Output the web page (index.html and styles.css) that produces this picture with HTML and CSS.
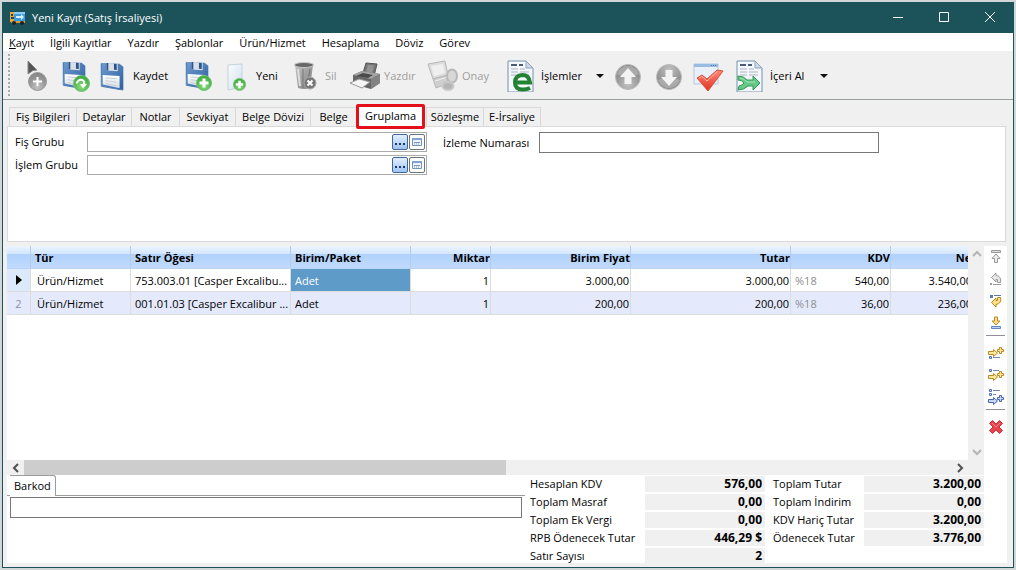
FILE: index.html
```html
<!DOCTYPE html>
<html lang="tr">
<head>
    <meta charset="UTF-8">
    <meta name="viewport" content="width=device-width, initial-scale=1.0">
    <title>Yeni Kayıt (Satış İrsaliyesi)</title>
    <link rel="stylesheet" href="styles.css">
</head>
<body>
    <!-- Shared icon parts -->
    <svg class="defs" aria-hidden="true">
        <defs>
            <linearGradient id="g-blue" x1="0" y1="0" x2="1" y2="1"><stop offset="0" stop-color="#6f9bd0"/><stop offset="1" stop-color="#2d5f9f"/></linearGradient>
            <linearGradient id="g-white" x1="0" y1="0" x2="0" y2="1"><stop offset="0" stop-color="#fff"/><stop offset="1" stop-color="#d3dce4"/></linearGradient>
            <linearGradient id="g-gray" x1="0" y1="0" x2="1" y2="1"><stop offset="0" stop-color="#c4c4c4"/><stop offset="1" stop-color="#7c7c7c"/></linearGradient>
            <radialGradient id="g-ball" cx=".5" cy=".8" r=".8"><stop offset="0" stop-color="#c2c2c2"/><stop offset=".6" stop-color="#979797"/><stop offset="1" stop-color="#838383"/></radialGradient>
            <radialGradient id="g-green" cx=".5" cy=".7" r=".7"><stop offset="0" stop-color="#8bdc7c"/><stop offset="1" stop-color="#36a33b"/></radialGradient>
            <linearGradient id="g-red" x1="0" y1="0" x2="0" y2="1"><stop offset="0" stop-color="#fb8a78"/><stop offset="1" stop-color="#e5301f"/></linearGradient>
            <linearGradient id="g-page" x1="0" y1="0" x2="1" y2="1"><stop offset="0" stop-color="#fbfdfe"/><stop offset="1" stop-color="#cfe0ec"/></linearGradient>
            <symbol id="floppy" viewBox="0 0 32 32">
                <path d="M3 2h3l17 1 4 3v25L4 27z" fill="url(#g-blue)"/>
                <path d="M5 15l18 1v13L5 25z" fill="url(#g-white)"/>
                <path d="M9 2l12 1v8L9 10z" fill="#d9e0e8"/>
                <path d="M9 2h2v8H9zM17 3l3 .2v6.3l-3-.2z" fill="#2e5588"/>
                <path d="M8 18l12 1M8 21l12 1.500M8 24l12 2.500" stroke="#c3ccd4"/>
                <path d="M3.500 3v24l23 4" fill="none" stroke="#4777b3"/>
            </symbol>
            <symbol id="plus-ball" viewBox="0 0 16 16">
                <circle cx="8" cy="8" r="7.500" fill="url(#g-green)" stroke="#73c276"/>
                <path d="M8 3.500v9M3.500 8h9" stroke="#fff" stroke-width="3"/>
            </symbol>
            <symbol id="doc" viewBox="0 0 32 32">
                <path d="M2 1h18l7 7v24H2z" fill="#f4f8fc" stroke="#7590ae"/>
                <path d="M20 1v7h7z" fill="#cddaea" stroke="#8ca3bd"/>
                <path d="M5 5h6M13 5h4" stroke="#4a5c78" stroke-width="2"/>
                <path d="M5 9h7M14 9h5M5 12h7M14 12h9M5 15h7M14 15h9" stroke="#a9b3c3"/>
            </symbol>
            <symbol id="arrow-ball" viewBox="0 0 32 32">
                <circle cx="16" cy="17" r="12.500" fill="url(#g-ball)" stroke="#bcbcbc"/>
                <path d="M5 14a11.500 11.500 0 0 1 22 0q-11 5-22 0z" fill="#bdbdbd" opacity=".6"/>
                <path d="M16 8l8 9h-4.500v7h-7v-7H8z" fill="#f3f3f3"/>
            </symbol>
            <symbol id="dots" viewBox="0 0 12 12"><path d="M1 7h2v2H1zM5 7h2v2H5zM9 7h2v2H9z" fill="#1c3766"/></symbol>
            <symbol id="card" viewBox="0 0 12 12">
                <path d="M1.500 2.500h9v7h-9z" fill="#eef4fc" stroke="#7591bd"/>
                <path d="M2 2h8v2H2z" fill="#7fa3d6"/>
                <path d="M3 6.500h6" stroke="#8298bb"/>
                <path d="M3 8h1M5 8h1M7 8h1" stroke="#8298bb"/>
            </symbol>
            <symbol id="arrow-plus" viewBox="0 0 16 10">
                <path d="M.5 4.500h5v-2l4 3.500-4 3.500v-2h-5z" stroke="currentColor"/>
                <path d="M11.500 .5h2v2h2v2h-2v2h-2v-2h-2v-2h2z" stroke="currentColor"/>
            </symbol>
        </defs>
    </svg>

    <div class="window">
        <header class="titlebar">
            <svg class="app-icon" viewBox="0 0 16 16">
                <path d="M0 2h5v10H0z" fill="#e2a93c"/>
                <path d="M1 4h2v2H1zM1 7h3v2H1z" fill="#25404a"/>
                <path d="M4 2h11v9H4z" fill="#3f9be0"/>
                <path d="M4 2h11v2H4z" fill="#8ccdf5"/>
                <path d="M6 6h5V4l3 3-3 3V8H6z" fill="#d8effc"/>
                <path d="M1 11h14v2H1z" fill="#d79b32"/>
                <circle cx="4" cy="13" r="2" fill="#182327"/><circle cx="12" cy="13" r="2" fill="#182327"/>
            </svg>
            <h1 class="title">Yeni Kayıt (Satış İrsaliyesi)</h1>
            <button class="win-btn" aria-label="Simge durumuna küçült"><svg viewBox="0 0 10 10"><path d="M0 5.500h10"/></svg></button>
            <button class="win-btn" aria-label="Ekranı kapla"><svg viewBox="0 0 10 10"><path d="M.5 .5h9v9h-9z"/></svg></button>
            <button class="win-btn" aria-label="Kapat"><svg viewBox="0 0 10 10"><path d="M0 0l10 10M10 0L0 10"/></svg></button>
        </header>

        <nav class="menu">
            <button><u>K</u>ayıt</button>
            <button>İlgili Kayıtlar</button>
            <button>Yazdır</button>
            <button>Şablonlar</button>
            <button>Ürün/Hizmet</button>
            <button>Hesaplama</button>
            <button>Döviz</button>
            <button>Görev</button>
        </nav>

        <div class="toolbar">
            <span class="grip"></span>
            <button class="tool" aria-label="Seç ve ekle">
                <svg viewBox="0 0 32 32">
                    <path d="M6 1l9 9-4 .5L6 14z" fill="#555" stroke="#888"/>
                    <circle cx="15.500" cy="21.500" r="9" fill="url(#g-ball)" stroke="#999"/>
                    <path d="M15.500 17v9M11 21.500h9" stroke="#fff" stroke-width="2"/>
                </svg>
            </button>
            <button class="tool" aria-label="Kaydet ve yenile">
                <svg viewBox="0 0 32 32">
                    <use href="#floppy" width="32" height="30"/>
                    <circle cx="22.500" cy="23.500" r="8" fill="url(#g-green)" stroke="#73c276"/>
                    <path d="M17.500 23.500q2-5 6-3.500 3 2 1 5" fill="none" stroke="#fff" stroke-width="2"/>
                    <path d="M28 24l-7 0 3 4.500z" fill="#fff"/>
                </svg>
            </button>
            <button class="tool"><svg viewBox="0 0 32 32"><use href="#floppy" width="30" height="32"/></svg>Kaydet</button>
            <button class="tool" aria-label="Kaydet ve yeni">
                <svg viewBox="0 0 32 32"><use href="#floppy" width="32" height="30"/><use href="#plus-ball" x="14" y="15" width="16" height="16"/></svg>
            </button>
            <button class="tool">
                <svg viewBox="0 0 32 32"><path d="M7 5l14-1v23l-14 3z" fill="url(#g-page)" stroke="#c2d3df"/><use href="#plus-ball" x="12" y="18" width="13" height="13"/></svg>Yeni
            </button>
            <button class="tool" disabled>
                <svg viewBox="0 0 32 32">
                    <path d="M5 5l18 0-3 23q-6 2-12 0z" fill="url(#g-gray)"/>
                    <path d="M8 9l2 17" stroke="#dedede" stroke-width="2"/>
                    <path d="M13 9v19M20 9l-2 12" stroke="#777"/>
                    <ellipse cx="14" cy="5" rx="9.500" ry="2.500" fill="#686868" stroke="#c5c5c5"/>
                    <circle cx="20" cy="23" r="6" fill="#777" stroke="#aaa"/>
                    <path d="M17.500 20.500l5 5M22.500 20.500l-5 5" stroke="#fff" stroke-width="2"/>
                </svg>Sil
            </button>
            <button class="tool" disabled>
                <svg viewBox="0 0 32 32">
                    <path d="M14 13l3-10 11 1-3 12z" fill="#777" stroke="#555"/>
                    <path d="M17 12l2-7 6 .5-2 8z" fill="#949494"/>
                    <path d="M4 15l9-4 18 3v9l-9 6-18-5z" fill="#666"/>
                    <path d="M4 15l9-4 18 3-9 5z" fill="#a4a4a4"/>
                    <path d="M22 19l9-5v9l-9 6z" fill="#838383"/>
                    <path d="M7 16l7-3 10 2-5 3z" fill="#4a4a4a"/>
                    <path d="M1 23l9-4 11 3-8 6z" fill="#f5f5f5" stroke="#999"/>
                </svg>Yazdır
            </button>
            <button class="tool" disabled>
                <svg viewBox="0 0 32 32">
                    <path d="M1 4l17-3 3 14-15 4z" fill="#ddd" stroke="#b7b7b7"/>
                    <path d="M4 6l12-2 2 9-11 3z" fill="#efefef"/>
                    <path d="M6 19l15-4 4 7-16 6z" fill="#cfcfcf" stroke="#b7b7b7"/>
                    <path d="M8 21l13-4" stroke="#eee"/>
                    <ellipse cx="25" cy="16" rx="5" ry="6.500" fill="#d7d7d7" stroke="#b8b8b8" stroke-width="2"/>
                    <ellipse cx="21" cy="26" rx="5.500" ry="4" fill="#b5b5b5" stroke="#c9c9c9" stroke-width="2"/>
                </svg>Onay
            </button>
            <button class="tool">
                <svg viewBox="0 0 32 32">
                    <use href="#doc" width="32" height="32"/>
                    <path d="M9 22.500H24Q23 15 16.500 15Q9 15.500 9 22.500Q9 29.500 16.500 29.500Q21 29.500 24 28" fill="none" stroke="#238333" stroke-width="4"/>
                </svg>İşlemler<i class="caret"></i>
            </button>
            <button class="tool" aria-label="Yukarı"><svg viewBox="0 0 32 32"><use href="#arrow-ball" width="32" height="32"/></svg></button>
            <button class="tool" aria-label="Aşağı"><svg viewBox="0 0 32 32"><use href="#arrow-ball" width="32" height="32" transform="rotate(180 16 17)"/></svg></button>
            <button class="tool" aria-label="Onayla">
                <svg viewBox="0 0 32 32">
                    <path d="M2 4h24v20H2z" fill="#e8f0f9" stroke="#b4c8e0"/>
                    <path d="M2 4h24v3H2z" fill="#9bbce2"/>
                    <path d="M19 5.500h6" stroke="#477ab7" stroke-dasharray="1 1"/>
                    <path d="M5 18l5-3 5 4 10-9 6 1-15 20z" fill="url(#g-red)" stroke="#dc4b3c"/>
                    <path d="M7 18l3-1.500 5 4.500 10.500-9.500" fill="none" stroke="#ffb9ab"/>
                </svg>
            </button>
            <button class="tool">
                <svg viewBox="0 0 32 32">
                    <use href="#doc" width="32" height="32"/>
                    <path d="M3 16q6 0 9 4h6v-4l7 7-7 7v-4h-5q-4 4-10 4l1-4q4-1 5-3-2-3-6-3z" fill="#67c786" stroke="#2f9a57"/>
                    <path d="M5 18q5 1 7 4h8" fill="none" stroke="#a8e6ba"/>
                </svg>İçeri Al<i class="caret"></i>
            </button>
        </div>

        <main class="content">
            <div class="tabs" role="tablist">
                <button class="tab" role="tab">Fiş Bilgileri</button>
                <button class="tab" role="tab">Detaylar</button>
                <button class="tab" role="tab">Notlar</button>
                <button class="tab" role="tab">Sevkiyat</button>
                <button class="tab" role="tab">Belge Dövizi</button>
                <button class="tab" role="tab">Belge</button>
                <button class="tab active" role="tab" aria-selected="true">Gruplama</button>
                <button class="tab" role="tab">Sözleşme</button>
                <button class="tab" role="tab">E-İrsaliye</button>
            </div>

            <form class="panel">
                <div class="fields">
                    <label for="fis">Fiş Grubu</label>
                    <div class="lookup">
                        <input type="text" id="fis">
                        <button type="button" class="pick" aria-label="Fiş grubu seç"><svg viewBox="0 0 12 12"><use href="#dots"/></svg></button>
                        <button type="button" class="open" aria-label="Fiş grubu aç"><svg viewBox="0 0 12 12"><use href="#card"/></svg></button>
                    </div>
                    <label for="islem">İşlem Grubu</label>
                    <div class="lookup">
                        <input type="text" id="islem">
                        <button type="button" class="pick" aria-label="İşlem grubu seç"><svg viewBox="0 0 12 12"><use href="#dots"/></svg></button>
                        <button type="button" class="open" aria-label="İşlem grubu aç"><svg viewBox="0 0 12 12"><use href="#card"/></svg></button>
                    </div>
                </div>
                <div class="tracking">
                    <label for="izleme">İzleme Numarası</label>
                    <input type="text" id="izleme">
                </div>
            </form>

            <div class="lower">
                <div class="work">
                    <div class="grid-area">
                        <div class="grid-scroll">
                            <table class="lines">
                                <colgroup>
                                    <col class="c-mark"><col class="c-type"><col class="c-item"><col class="c-unit"><col class="c-qty"><col class="c-price"><col class="c-total"><col class="c-vat"><col class="c-net">
                                </colgroup>
                                <thead>
                                    <tr>
                                        <th></th><th>Tür</th><th>Satır Öğesi</th><th>Birim/Paket</th>
                                        <th class="num">Miktar</th><th class="num">Birim Fiyat</th><th class="num">Tutar</th><th class="num">KDV</th><th class="num">Net</th>
                                    </tr>
                                </thead>
                                <tbody>
                                    <tr>
                                        <td class="mark"><i class="current"></i></td><td class="type">Ürün/Hizmet</td><td class="item">753.003.01 [Casper Excalibu...</td><td class="selected">Adet</td>
                                        <td class="num">1</td><td class="num">3.000,00</td><td class="num">3.000,00</td><td class="num"><span class="rate">%18</span>540,00</td><td class="num net">3.540,00</td>
                                    </tr>
                                    <tr>
                                        <td class="mark">2</td><td class="type">Ürün/Hizmet</td><td class="item">001.01.03 [Casper Excalibur ...</td><td>Adet</td>
                                        <td class="num">1</td><td class="num">200,00</td><td class="num">200,00</td><td class="num"><span class="rate">%18</span>36,00</td><td class="num net">236,00</td>
                                    </tr>
                                </tbody>
                            </table>
                        </div>
                        <div class="vscroll">
                            <button aria-label="Yukarı kaydır"><svg viewBox="0 0 10 10"><path d="M1 7l4-4 4 4"/></svg></button>
                            <button aria-label="Aşağı kaydır"><svg viewBox="0 0 10 10"><path d="M1 3l4 4 4-4"/></svg></button>
                        </div>
                    </div>
                    <div class="hscroll">
                        <button aria-label="Sola kaydır"><svg viewBox="0 0 10 10"><path d="M7 1L3 5l4 4"/></svg></button>
                        <div class="track"><div class="thumb"></div></div>
                        <button aria-label="Sağa kaydır"><svg viewBox="0 0 10 10"><path d="M3 1l4 4-4 4"/></svg></button>
                    </div>

                    <footer class="summary">
                        <div class="barcode">
                            <div class="barcode-tab"><label for="barkod">Barkod</label></div>
                            <input type="text" id="barkod">
                        </div>
                        <dl class="totals">
                            <dt>Hesaplan KDV</dt><dd>576,00</dd><dt>Toplam Tutar</dt><dd>3.200,00</dd>
                            <dt>Toplam Masraf</dt><dd>0,00</dd><dt>Toplam İndirim</dt><dd>0,00</dd>
                            <dt>Toplam Ek Vergi</dt><dd>0,00</dd><dt>KDV Hariç Tutar</dt><dd>3.200,00</dd>
                            <dt>RPB Ödenecek Tutar</dt><dd>446,29 $</dd><dt>Ödenecek Tutar</dt><dd>3.776,00</dd>
                            <dt>Satır Sayısı</dt><dd>2</dd>
                        </dl>
                    </footer>
                </div>

                <aside class="side">
                    <button aria-label="En üste taşı"><svg viewBox="0 0 16 16"><path d="M3.500 1.500h9v2h-9z" fill="#ddd" stroke="#999"/><path d="M8 5l4 4.500H9.500v4h-3v-4H4z" fill="#eee" stroke="#999"/></svg></button>
                    <button aria-label="Yukarı taşı"><svg viewBox="0 0 16 16"><path d="M2 12h2v2H2z" fill="#999"/><path d="M5 13.500h8" stroke="#999"/><path d="M8 2L3.500 6.500 8 11V8.500h1.500v3h3q1.500-6-4.500-7z" fill="#e8e8e8" stroke="#999"/></svg></button>
                    <button aria-label="Aşağı taşı"><svg viewBox="0 0 16 16"><path d="M2 2h3v3H2z" fill="#5c78ad"/><path d="M6 2.500h7" stroke="#5c78ad"/><path d="M8 14L3.500 9.500 8 5v2.500h1.500v-3h3q1.500 6-4.500 7z" fill="#ffe08a" stroke="#b98a24"/></svg></button>
                    <button aria-label="En alta taşı"><svg viewBox="0 0 16 16"><path d="M8 10L4 6h2.500V2h3v4H12z" fill="#ffe08a" stroke="#b98a24"/><path d="M3.500 11.500h9v2h-9z" fill="#bcd3f5" stroke="#5c86c4"/></svg></button>
                    <hr>
                    <button class="gold" aria-label="Üste ekle"><svg viewBox="0 0 16 16"><use href="#arrow-plus" y="2" width="16" height="10"/><path d="M1.500 11.500h2v2h-2z" fill="#bccbec" stroke="#5b74ad"/><path d="M5 12.500h7" stroke="#6f87b9"/></svg></button>
                    <button class="gold" aria-label="Alta ekle"><svg viewBox="0 0 16 16"><path d="M1.500 2.500h2v2h-2z" fill="#bccbec" stroke="#5b74ad"/><path d="M5 3.500h6" stroke="#6f87b9"/><use href="#arrow-plus" y="4" width="16" height="10"/></svg></button>
                    <button class="blue" aria-label="Sona ekle"><svg viewBox="0 0 16 16"><path d="M1.500 .5h2v2h-2zM1.500 4.500h2v2h-2z" fill="#bccbec" stroke="#5b74ad"/><path d="M5 1.500h7M5 5.500h3" stroke="#6f87b9"/><use href="#arrow-plus" y="6" width="16" height="10"/></svg></button>
                    <hr>
                    <button aria-label="Satırı sil"><svg viewBox="0 0 16 16"><path d="M4.500 1.500L8 5l3.500-3.500 3 3L11 8l3.500 3.500-3 3L8 11l-3.500 3.500-3-3L5 8 1.500 4.500z" fill="#e9434b" stroke="#c9303b"/><path d="M4 4l4 4 4-4" fill="none" stroke="#f58c8c"/></svg></button>
                </aside>
            </div>
        </main>
    </div>
</body>
</html>
```
FILE: styles.css
```css
* {
    box-sizing: border-box;
}
body {
    margin: 0;
    padding: 2px;
    height: 100vh;
    display: flex;
    background: #d2d6d6;
    font-family: "Open Sans", "Noto Sans", sans-serif;
    font-size: 11px;
    line-height: 16px;
    color: #000;
}
button {
    border: none;
    padding: 0;
    background: none;
    font: inherit;
    color: inherit;
}
input {
    border: 1px solid #777;
    padding: 0 4px;
    background: #fff;
    font: inherit;
    min-width: 0;
}
.defs {
    position: absolute;
    width: 0;
    height: 0;
}
.window {
    flex: 1;
    min-width: 0;
    display: flex;
    flex-direction: column;
    border: 1px solid #1c535b;
    background: #f0f0f0;
}

/* Title bar */
.titlebar {
    display: flex;
    align-items: center;
    height: 30px;
    padding-left: 7px;
    background: #1c535b;
    color: #fff;
}
.app-icon {
    width: 16px;
    height: 16px;
    margin-right: 6px;
}
.title {
    flex: 1;
    margin: 0;
    font-size: 11px;
    font-weight: normal;
}
.win-btn {
    width: 46px;
    height: 30px;
}
.win-btn svg {
    width: 10px;
    height: 10px;
    fill: none;
    stroke: #fff;
}

/* Menu */
.menu {
    display: flex;
    gap: 16px;
    height: 18px;
    padding: 2px 6px 0;
    background: #fff;
}

/* Toolbar */
.toolbar {
    display: grid;
    grid-template-columns: 14px 37px 39px 84px 39px 69px 59px 78px 79px 106px 41px 39px 43px 101px;
    align-items: center;
    height: 49px;
    padding: 2px 0 0 5px;
    border-bottom: 1px solid #9a9f9f;
}
.grip {
    height: 44px;
    width: 2px;
    background: repeating-linear-gradient(#aaa 0 2px, transparent 2px 4px);
}
.tool {
    display: flex;
    align-items: center;
    gap: 3px;
    padding-right: 8px;
    white-space: nowrap;
}
.tool svg {
    flex: none;
    width: 32px;
    height: 32px;
}
.tool:disabled {
    color: #9d9d9d;
}
.caret {
    margin-left: auto;
    border: 4px solid transparent;
    border-top-color: #111;
    border-bottom: none;
}

/* Tabs */
.content {
    flex: 1;
    min-height: 0;
    display: flex;
    flex-direction: column;
    padding: 7px 6px 4px 4px;
}
.tabs {
    display: grid;
    grid-template-columns: 67px 55px 48px 56px 75px 46px 70px 57px 58px;
    padding-left: 2px;
}
.tab {
    height: 19px;
    border: 1px solid #d9d9d9;
    border-width: 1px 0 0 1px;
    white-space: nowrap;
}
.tab:last-child {
    border-right-width: 1px;
}
.tab.active {
    position: relative;
    height: 25px;
    margin: -3px 1px -3px 0;
    padding-bottom: 2px;
    border: 3px solid #e3101b;
    border-radius: 2px;
    background: #fff;
}
.panel {
    display: flex;
    align-items: flex-start;
    gap: 16px;
    height: 116px;
    margin: 0 1px 4px 0;
    padding: 5px 7px;
    border: 1px solid #dadada;
    background: #fff;
}
.fields {
    display: grid;
    grid-template-columns: 72px 340px;
    row-gap: 3px;
    align-items: center;
}
.lookup {
    display: flex;
    align-items: center;
    gap: 1px;
    height: 20px;
    padding-right: 1px;
    border: 1px solid #ababab;
}
.lookup input {
    flex: 1;
    height: 18px;
    border: none;
}
.lookup button {
    display: flex;
    align-items: center;
    justify-content: center;
    width: 16px;
    height: 16px;
    border: 1px solid #6a7480;
    border-radius: 2px;
}
.lookup .pick {
    border-color: #40689c;
    background: linear-gradient(#e3effd, #9fc4f3);
}
.lookup svg {
    width: 12px;
    height: 12px;
}
.tracking {
    display: grid;
    grid-template-columns: 96px 340px;
    align-items: center;
}
.tracking input {
    height: 21px;
}

/* Line grid */
.lower {
    flex: 1;
    min-height: 0;
    display: flex;
}
.work {
    flex: 1;
    min-width: 0;
    display: flex;
    flex-direction: column;
}
.grid-area {
    flex: 1;
    min-height: 0;
    display: flex;
}
.grid-scroll {
    flex: 1;
    min-width: 0;
    overflow: hidden;
    background: #fff;
}
.lines {
    width: 970px;
    table-layout: fixed;
    border-collapse: separate;
    border-spacing: 0;
}
.c-mark { width: 24px; }
.c-type { width: 100px; }
.c-item { width: 160px; }
.c-unit { width: 120px; }
.c-qty { width: 80px; }
.c-price { width: 140px; }
.c-total { width: 160px; }
.c-vat { width: 100px; }
.c-net { width: 86px; }
.lines th,
.lines td {
    height: 23px;
    padding: 2px 4px 0;
    border-right: 1px solid #dcdcdc;
    border-bottom: 1px solid #dcdcdc;
    overflow: hidden;
    text-overflow: ellipsis;
    white-space: nowrap;
    text-align: left;
}
.lines th {
    border-right-color: #b5cbe6;
    border-bottom-color: #b9d4f5;
    background: linear-gradient(#edf5ff, #d3e6fd 35%, #b0d1fb 36%, #c0dafd);
    font-weight: bold;
}
.lines tr:nth-child(2) td {
    background: #e4eafc;
}
.lines th.num {
    padding-right: 0;
    text-align: right;
}
.lines .num {
    padding-right: 1px;
    text-align: right;
}
.lines .type {
    padding-left: 6px;
}
.lines .item {
    padding-right: 0;
}
.lines .net {
    padding-right: 4px;
    text-overflow: clip;
}
.lines tbody .mark {
    background: #dbe9fb;
    color: #8a929c;
    text-align: center;
}
.lines .selected {
    background: #5f9bc9;
    color: #fff;
}
.current {
    display: inline-block;
    border: 5px solid transparent;
    border-left: 6px solid #000;
    border-right: none;
}
.rate {
    float: left;
    color: #8d8d8d;
}

/* Scroll bars */
.vscroll {
    display: flex;
    flex-direction: column;
    justify-content: space-between;
    width: 16px;
}
.vscroll button,
.hscroll button {
    display: flex;
    align-items: center;
    justify-content: center;
    width: 17px;
    height: 16px;
}
.vscroll svg,
.hscroll svg {
    width: 10px;
    height: 10px;
    fill: none;
    stroke: #b5b5b5;
    stroke-width: 2;
}
.hscroll svg {
    stroke: #505050;
}
.hscroll {
    display: flex;
    height: 15px;
    padding-right: 16px;
}
.track {
    flex: 1;
}
.thumb {
    width: 52%;
    height: 15px;
    background: #cdcdcd;
}

/* Summary */
.summary {
    display: flex;
    height: 88px;
    background: #fff;
}
.barcode {
    flex: 1;
    display: flex;
    flex-direction: column;
    gap: 1px;
}
.barcode-tab {
    height: 21px;
    padding-left: 3px;
    border-bottom: 1px solid #9c9c9c;
}
.barcode-tab label {
    display: inline-block;
    height: 21px;
    padding: 2px 4px;
    border: 1px solid #9c9c9c;
    border-width: 1px 1px 0 0;
    border-top-right-radius: 3px;
    background: #fff;
}
.barcode input {
    height: 21px;
    margin: 0 3px;
}
.totals {
    display: grid;
    grid-template-columns: 120px 120px 99px 120px;
    grid-auto-rows: 16px;
    row-gap: 2px;
    align-content: start;
    margin: 0;
    padding-top: 1px;
}
.totals dt {
    padding-left: 5px;
    white-space: nowrap;
}
.totals dt:nth-of-type(even) {
    padding-left: 8px;
}
.totals dd {
    margin: 0;
    padding-right: 3px;
    background: #f0f0f0;
    font-size: 12px;
    font-weight: bold;
    text-align: right;
}

/* Row tools */
.side {
    width: 23px;
    background: #fff;
}
.side button {
    display: flex;
    align-items: center;
    justify-content: center;
    width: 23px;
    height: 22px;
}
.side svg {
    width: 16px;
    height: 16px;
}
.side hr {
    margin: 1px 2px 6px;
    border: none;
    border-top: 1px solid #8f8f96;
}
.gold {
    color: #b98a24;
    fill: #ffe79c;
}
.blue {
    color: #4766ab;
    fill: #c6d6f7;
}
```
